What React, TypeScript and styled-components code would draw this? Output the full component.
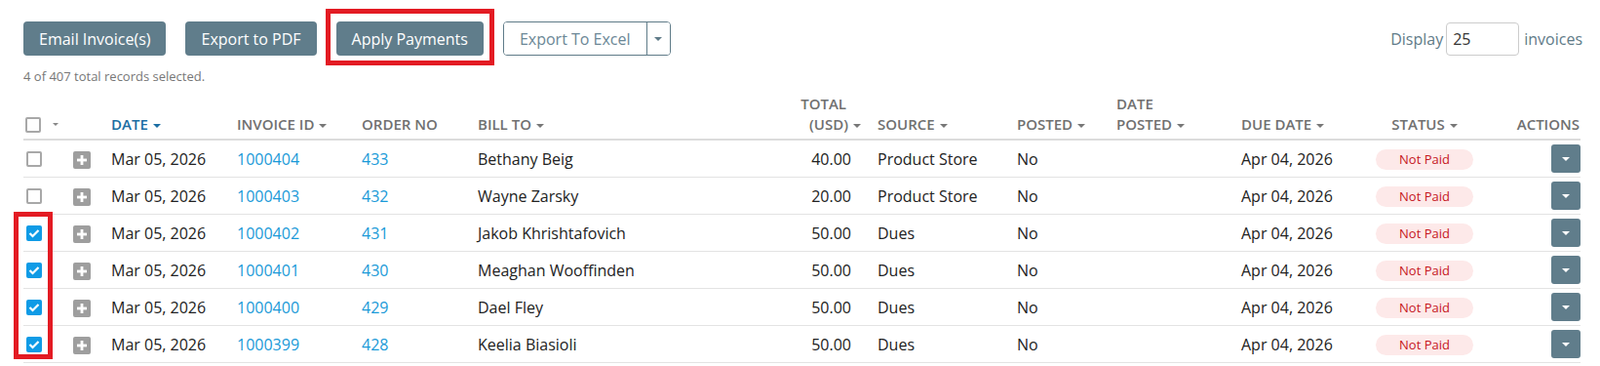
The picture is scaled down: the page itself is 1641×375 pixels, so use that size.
import React from "react";
import styled, { createGlobalStyle, css } from "styled-components";

const GlobalStyle = createGlobalStyle`
  body {
    margin: 0;
    background: #fff;
    font-family: "Open Sans", "Noto Sans", sans-serif;
    color: #222;
  }
`;

const Page = styled.div`
  position: relative;
  padding: 22px 18px 0 24px;
`;

const Toolbar = styled.div`
  display: flex;
  align-items: center;
  gap: 20px;
  height: 35px;
`;

const Button = styled.button`
  height: 35px;
  padding: 0 16px;
  border: none;
  border-radius: 4px;
  background: #607d8b;
  color: #fff;
  font-family: inherit;
  font-size: 16px;
  cursor: pointer;
`;

const Highlight = styled.div`
  position: relative;
  &::after {
    content: "";
    position: absolute;
    inset: -13px -11px -10px -11px;
    border: 5px solid #e31b23;
    pointer-events: none;
  }
`;

const SplitButton = styled.div`
  display: flex;
  height: 35px;
  border: 1px solid #5f7b88;
  border-radius: 4px;
  box-sizing: border-box;
  overflow: hidden;
`;

const SplitMain = styled.button`
  padding: 0 16px;
  border: none;
  background: #fff;
  color: #6b8796;
  font-family: inherit;
  font-size: 16px;
`;

const SplitToggle = styled.button`
  width: 24px;
  border: none;
  border-left: 1px solid #5f7b88;
  background: #fff;
  display: flex;
  align-items: center;
  justify-content: center;
  padding: 0;
`;

const Caret = styled.span<{ $color?: string; $size?: number }>`
  display: inline-block;
  width: 0;
  height: 0;
  border-left: ${(p) => p.$size ?? 4}px solid transparent;
  border-right: ${(p) => p.$size ?? 4}px solid transparent;
  border-top: ${(p) => p.$size ?? 4}px solid ${(p) => p.$color ?? "#777"};
`;

const Spacer = styled.div`
  flex: 1;
`;

const DisplayGroup = styled.div`
  display: flex;
  align-items: center;
  font-size: 16px;
  color: #5f7b88;
`;

const DisplayInput = styled.input`
  width: 75px;
  height: 34px;
  margin: 0 5px 0 3px;
  box-sizing: border-box;
  border: 1px solid #ccc;
  border-radius: 4px;
  padding: 0 6px;
  font-family: inherit;
  font-size: 16px;
  color: #333;
`;

const Summary = styled.div`
  margin-top: 12px;
  font-size: 13px;
  line-height: 18px;
  color: #777;
`;

const Table = styled.table`
  margin-top: 5px;
  width: 1597px;
  border-collapse: collapse;
  table-layout: fixed;
`;

type Align = "left" | "right" | "center";

const Th = styled.th<{ $align?: Align; $active?: boolean; $padRight?: number }>`
  padding: 4px ${(p) => p.$padRight ?? 0}px 4px 0;
  border-bottom: 2px solid #dcdcdc;
  text-align: ${(p) => p.$align ?? "left"};
  vertical-align: bottom;
  font-size: 15px;
  font-weight: 600;
  line-height: 21px;
  text-transform: uppercase;
  color: ${(p) => (p.$active ? "#1b6ea3" : "#707070")};
  white-space: nowrap;
  ${Caret} {
    margin-left: 5px;
    vertical-align: middle;
  }
`;

const HeadLine = styled.span<{ $gap?: number }>`
  display: block;
  margin-right: ${(p) => p.$gap ?? 0}px;
`;

const Td = styled.td<{ $align?: Align; $padRight?: number }>`
  height: 37px;
  padding: 0 ${(p) => p.$padRight ?? 0}px 0 0;
  border-bottom: 1px solid #e3e3e3;
  text-align: ${(p) => p.$align ?? "left"};
  vertical-align: middle;
  font-size: 16px;
  color: #222;
  white-space: nowrap;
`;

const Link = styled.a`
  color: #1a9ad8;
  text-decoration: none;
`;

const Box = styled.span<{ $checked?: boolean }>`
  display: inline-flex;
  align-items: center;
  justify-content: center;
  width: 16px;
  height: 16px;
  border-radius: 2px;
  vertical-align: middle;
  box-sizing: border-box;
  ${(p) =>
    p.$checked
      ? css`
          background: #0f9be6;
        `
      : css`
          border: 2px solid #a8a8a8;
          background: #fff;
        `}
`;

const HeadCheck = styled.div`
  display: flex;
  align-items: center;
  gap: 7px;
  height: 21px;
  padding-left: 2px;
`;

const RowCheck = styled.div`
  padding-left: 3px;
  display: flex;
`;

const Expand = styled.span`
  display: inline-flex;
  align-items: center;
  justify-content: center;
  width: 18px;
  height: 18px;
  border-radius: 2px;
  background: #9e9e9e;
  vertical-align: middle;
`;

const Badge = styled.span`
  display: inline-block;
  width: 100px;
  height: 21px;
  line-height: 21px;
  border-radius: 11px;
  background: #fde9e9;
  color: #c6161d;
  font-size: 13px;
  text-align: center;
`;

const ActionButton = styled.button`
  width: 30px;
  height: 29px;
  border: none;
  border-radius: 3px;
  background: #607d8b;
  display: inline-flex;
  align-items: center;
  justify-content: center;
  padding: 0;
  vertical-align: middle;
`;

const ColumnHighlight = styled.div`
  position: absolute;
  left: 14px;
  top: 217px;
  width: 40px;
  height: 151px;
  box-sizing: border-box;
  border: 5px solid #e31b23;
  pointer-events: none;
`;

const Check = () => (
  <svg width="12" height="10" viewBox="0 0 12 10">
    <polyline points="1.5,5 4.5,8 10.5,2" fill="none" stroke="#fff" strokeWidth="2.2" />
  </svg>
);

const Plus = () => (
  <svg width="10" height="10" viewBox="0 0 10 10">
    <rect x="3.6" y="0" width="2.8" height="10" fill="#fff" />
    <rect x="0" y="3.6" width="10" height="2.8" fill="#fff" />
  </svg>
);

type Invoice = {
  id: string;
  order: string;
  billTo: string;
  total: string;
  source: string;
  checked: boolean;
};

const invoices: Invoice[] = [
  { id: "1000404", order: "433", billTo: "Bethany Beig", total: "40.00", source: "Product Store", checked: false },
  { id: "1000403", order: "432", billTo: "Wayne Zarsky", total: "20.00", source: "Product Store", checked: false },
  { id: "1000402", order: "431", billTo: "Jakob Khrishtafovich", total: "50.00", source: "Dues", checked: true },
  { id: "1000401", order: "430", billTo: "Meaghan Wooffinden", total: "50.00", source: "Dues", checked: true },
  { id: "1000400", order: "429", billTo: "Dael Fley", total: "50.00", source: "Dues", checked: true },
  { id: "1000399", order: "428", billTo: "Keelia Biasioli", total: "50.00", source: "Dues", checked: true },
];

const widths = [51, 39, 129, 128, 119, 300, 110, 143, 102, 128, 128, 120, 100];

export default function App() {
  return (
    <Page>
      <GlobalStyle />
      <Toolbar>
        <Button>Email Invoice(s)</Button>
        <Button>Export to PDF</Button>
        <Highlight>
          <Button>Apply Payments</Button>
        </Highlight>
        <SplitButton>
          <SplitMain>Export To Excel</SplitMain>
          <SplitToggle>
            <Caret $color="#5f7b88" />
          </SplitToggle>
        </SplitButton>
        <Spacer />
        <DisplayGroup>
          Display
          <DisplayInput defaultValue="25" />
          invoices
        </DisplayGroup>
      </Toolbar>
      <Summary>4 of 407 total records selected.</Summary>
      <Table>
        <colgroup>
          {widths.map((w, i) => (
            <col key={i} style={{ width: w }} />
          ))}
        </colgroup>
        <thead>
          <tr>
            <Th>
              <HeadCheck>
                <Box />
                <Caret $color="#888" $size={3.5} />
              </HeadCheck>
            </Th>
            <Th />
            <Th $active>
              Date
              <Caret $color="#1b6ea3" />
            </Th>
            <Th>
              Invoice ID
              <Caret />
            </Th>
            <Th>Order No</Th>
            <Th>
              Bill To
              <Caret />
            </Th>
            <Th $align="right" $padRight={17}>
              <HeadLine $gap={15}>Total</HeadLine>
              (USD)
              <Caret />
            </Th>
            <Th>
              Source
              <Caret />
            </Th>
            <Th>
              Posted
              <Caret />
            </Th>
            <Th>
              <HeadLine>Date</HeadLine>
              Posted
              <Caret />
            </Th>
            <Th>
              Due Date
              <Caret />
            </Th>
            <Th $align="center">
              Status
              <Caret />
            </Th>
            <Th $align="right" $padRight={1}>
              Actions
            </Th>
          </tr>
        </thead>
        <tbody>
          {invoices.map((inv) => (
            <tr key={inv.id}>
              <Td>
                <RowCheck>
                  <Box $checked={inv.checked}>{inv.checked && <Check />}</Box>
                </RowCheck>
              </Td>
              <Td>
                <Expand>
                  <Plus />
                </Expand>
              </Td>
              <Td>Mar 05, 2026</Td>
              <Td>
                <Link href="#">{inv.id}</Link>
              </Td>
              <Td>
                <Link href="#">{inv.order}</Link>
              </Td>
              <Td>{inv.billTo}</Td>
              <Td $align="right" $padRight={27}>
                {inv.total}
              </Td>
              <Td>{inv.source}</Td>
              <Td>No</Td>
              <Td />
              <Td>Apr 04, 2026</Td>
              <Td $align="center">
                <Badge>Not Paid</Badge>
              </Td>
              <Td $align="right">
                <ActionButton>
                  <Caret $color="#fff" />
                </ActionButton>
              </Td>
            </tr>
          ))}
        </tbody>
      </Table>
      <ColumnHighlight />
    </Page>
  );
}
